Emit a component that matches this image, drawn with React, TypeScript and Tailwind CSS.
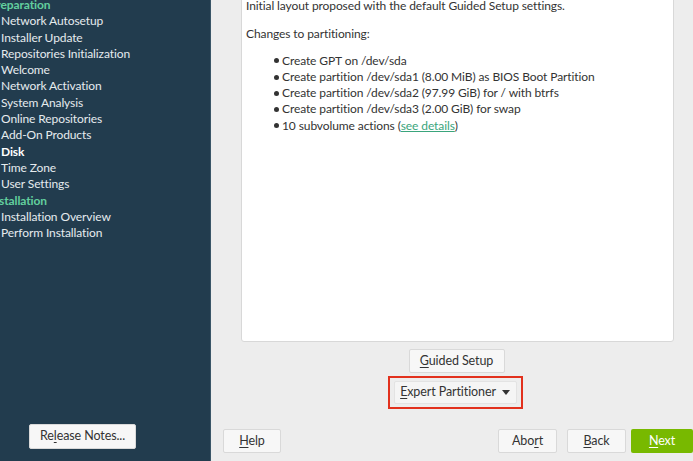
const steps: { label: string; kind?: 'head' | 'current' }[] = [
  { label: 'Preparation', kind: 'head' },
  { label: 'Network Autosetup' },
  { label: 'Installer Update' },
  { label: 'Repositories Initialization' },
  { label: 'Welcome' },
  { label: 'Network Activation' },
  { label: 'System Analysis' },
  { label: 'Online Repositories' },
  { label: 'Add-On Products' },
  { label: 'Disk', kind: 'current' },
  { label: 'Time Zone' },
  { label: 'User Settings' },
  { label: 'Installation', kind: 'head' },
  { label: 'Installation Overview' },
  { label: 'Perform Installation' },
];

const actions = [
  'Create GPT on /dev/sda',
  'Create partition /dev/sda1 (8.00 MiB) as BIOS Boot Partition',
  'Create partition /dev/sda2 (97.99 GiB) for / with btrfs',
  'Create partition /dev/sda3 (2.00 GiB) for swap',
];

// plain grey button with one underlined mnemonic letter
function Btn({ pre = '', key_, post, className = '' }: { pre?: string; key_: string; post: string; className?: string }) {
  return (
    <button className={`h-[24px] rounded-[2px] border border-[#d9d9d9] bg-[#f7f7f7] text-[12.5px] text-[#333] ${className}`}>
      {pre}
      <span className="underline underline-offset-2">{key_}</span>
      {post}
    </button>
  );
}

export default function App() {
  return (
    <div className="flex h-[461px] w-[693px] overflow-hidden font-['Lato',sans-serif] text-[12px] leading-[16.3px] tracking-[-0.1px]">
      {/* Sidebar */}
      <div className="flex w-[210px] shrink-0 flex-col justify-between bg-[#223c4e] pb-[12px]">
        <div className="mt-[-3px]">
          {steps.map((s) => (
            <div
              key={s.label}
              className={
                s.kind === 'head'
                  ? 'ml-[-11px] font-bold text-[#62cf9e]'
                  : s.kind === 'current'
                  ? 'ml-[1px] font-bold text-white'
                  : 'ml-[1px] text-[#e6ebee]'
              }
            >
              {s.label}
            </div>
          ))}
        </div>
        <button className="ml-[29px] h-[25px] w-[107px] rounded-[2px] border border-[#d9d9d9] bg-[#f7f7f7] text-[12.5px] text-[#333]">
          Re<span className="underline underline-offset-2">l</span>ease Notes...
        </button>
      </div>

      {/* Main area */}
      <div className="flex flex-1 flex-col border-l border-[#3a5668] bg-[#ededed]">
        <div className="ml-[30px] mr-[19px] mt-[-12px] h-[354px] shrink-0 rounded-b-[3px] border border-[#d8d8d8] bg-white pl-[4px] pt-[9px] text-[#333]">
          <p>Initial layout proposed with the default Guided Setup settings.</p>
          <p className="mt-[11.5px]">Changes to partitioning:</p>
          <ul className="mt-[10.5px] pl-[28px]">
            {actions.map((a) => (
              <li key={a} className="flex items-center">
                <span className="mr-[3px] h-[5px] w-[5px] rounded-full bg-[#333]" />
                {a}
              </li>
            ))}
            <li className="flex items-center">
              <span className="mr-[3px] h-[5px] w-[5px] rounded-full bg-[#333]" />
              10 subvolume actions (<span className="text-[#3aa57c] underline">see details</span>)
            </li>
          </ul>
        </div>

        <div className="mt-[7px] flex flex-col items-center">
          <Btn key_="G" post="uided Setup" className="ml-[9px] w-[96px]" />
          <div className="mt-[3px] ml-[6px] border-2 border-[#e2311d] px-[4px] py-[3px]">
            <button className="flex h-[23px] w-[123px] items-center justify-center gap-[6px] rounded-[2px] border border-[#e3e3e3] bg-[#f5f5f5] text-[12.5px] text-[#333]">
              <span>
                <span className="underline underline-offset-2">E</span>xpert Partitioner
              </span>
              <svg width="8" height="5" viewBox="0 0 8 5">
                <path d="M0 0h8L4 5z" fill="#333" />
              </svg>
            </button>
          </div>
        </div>

        <div className="mt-[20px] flex items-center">
          <Btn key_="H" post="elp" className="ml-[12px] w-[58px]" />
          <div className="flex-1" />
          <Btn pre="Abo" key_="r" post="t" className="w-[59px]" />
          <Btn key_="B" post="ack" className="ml-[10px] w-[59px]" />
          <button className="ml-[5px] h-[24px] w-[62px] shrink-0 rounded-[2px] bg-[#78b900] text-[12.5px] text-white">
            <span className="underline underline-offset-2">N</span>ext
          </button>
        </div>
      </div>
    </div>
  );
}
